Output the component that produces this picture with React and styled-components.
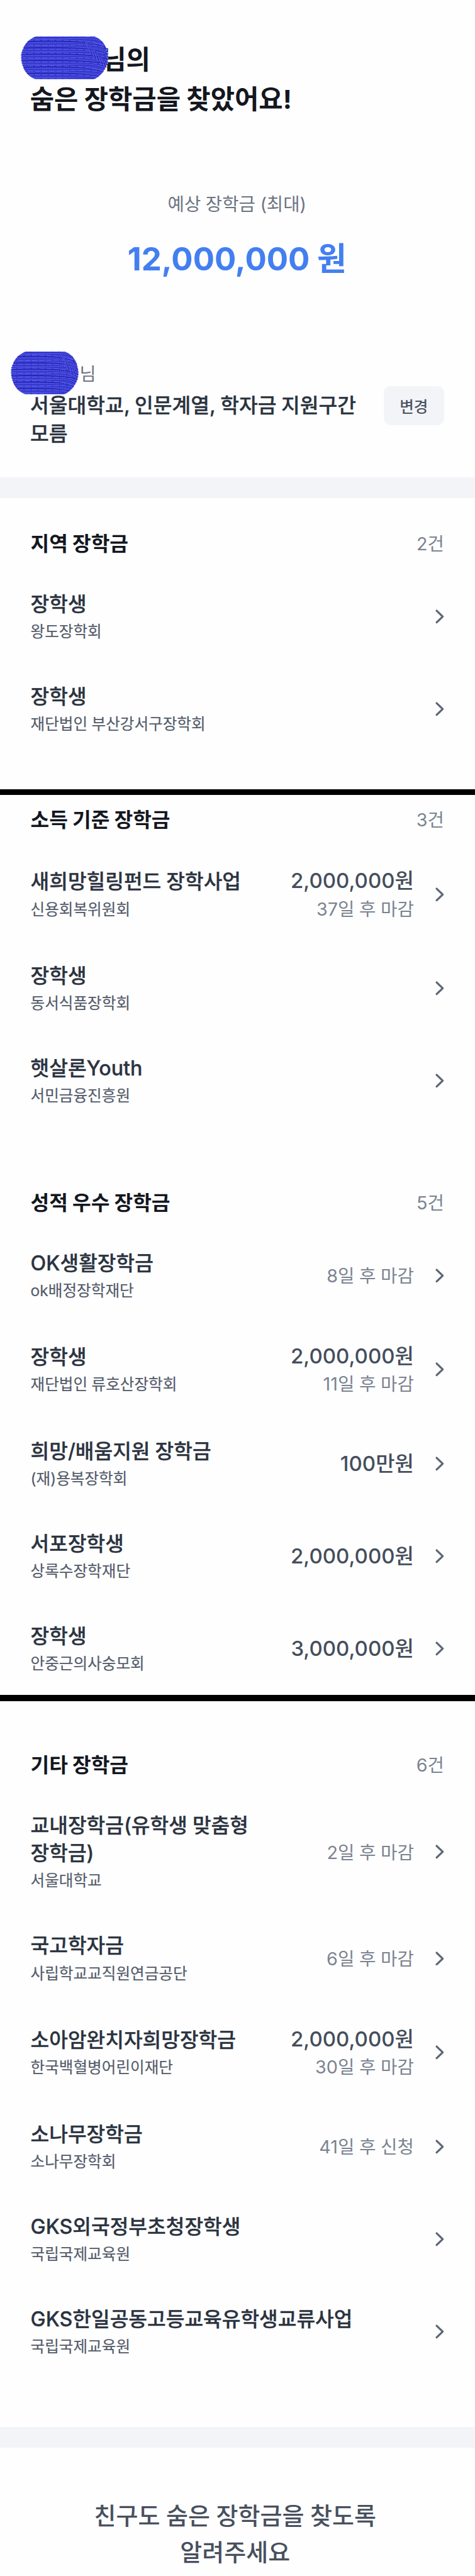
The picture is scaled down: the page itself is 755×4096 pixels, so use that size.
import styled, { createGlobalStyle, css } from "styled-components"

const GlobalStyle = createGlobalStyle`
  html {
    font-size: 9.432px;
  }
  body {
    margin: 0;
    background: #fefefe;
    overflow: hidden;
  }
  * {
    box-sizing: border-box;
  }
`

const medium = css`
  font-weight: 500;
  -webkit-text-stroke: ${({ $outline = 0.3 }) => $outline}px currentColor;
`

const Page = styled.main`
  height: 4096px;
  overflow: hidden;
  background: #fefefe;
  color: #2b3340;
  font-family: Inter, "Noto Sans CJK KR", sans-serif;
  word-break: keep-all;
  word-spacing: -0.055em;
`

const Hero = styled.header`
  padding: 6.8rem 5.2rem 0 5.05rem;
`

const Title = styled.h1`
  margin: 0;
  font-size: 4.42rem;
  font-weight: 700;
  line-height: 6.65rem;
  color: #14171f;
`

const Estimate = styled.div`
  padding-top: 12.1rem;
  text-align: center;
`

const EstimateLabel = styled.div`
  font-size: 3.04rem;
  line-height: 4.4rem;
  color: #6d7482;
`

const EstimateAmount = styled.div`
  margin-top: 3.6rem;
  font-size: 5.4rem;
  font-weight: 700;
  line-height: 7rem;
  color: #437ff0;
`

const Profile = styled.section`
  padding: 13.75rem 5.2rem 5rem 5.1rem;
`

const Owner = styled.div`
  font-size: 3rem;
  line-height: 4.4rem;
  color: #6d7482;
`

const ProfileRow = styled.div`
  display: flex;
  align-items: flex-start;
  justify-content: space-between;
  padding-top: 0.55rem;
`

const School = styled.div`
  flex: 1;
  font-size: 3.43rem;
  line-height: 4.8rem;
  word-spacing: -0.03em;
  ${medium}
`

const ChangeButton = styled.button`
  width: 10.2rem;
  height: 6.6rem;
  margin-top: -0.8rem;
  padding: 0;
  border: 0;
  border-radius: 1.2rem;
  background: #f2f4f8;
  color: #4c5462;
  font: inherit;
  font-size: 2.6rem;
  ${medium}
`

// Keeps room for the hidden name, the scribble itself lies over the text
const Masked = styled.span`
  position: relative;
  display: inline-block;
  width: ${({ $width }) => $width}rem;
  height: 1em;
`

const Scribble = styled.svg`
  position: absolute;
  left: ${({ $left }) => $left}rem;
  top: ${({ $top }) => $top}rem;
  width: ${({ $width }) => $width}rem;
  height: 7.2rem;
`

const Divider = styled.div`
  height: ${({ $dark }) => ($dark ? "1rem" : "3.5rem")};
  background: ${({ $dark }) => ($dark ? "#000" : "#f2f4f8")};
`

const Section = styled.section`
  padding: ${({ $top }) => $top}rem 5.2rem ${({ $bottom }) => $bottom}rem 5.15rem;
`

const SectionHead = styled.div`
  display: flex;
  justify-content: space-between;
  padding-top: 0.15rem;
  margin-bottom: 1.95rem;
  line-height: 5rem;
`

const SectionTitle = styled.h2`
  margin: 0;
  font-size: 3.42rem;
  font-weight: 700;
  color: #14171f;
`

const Count = styled.span`
  font-size: 3.05rem;
  color: #7b8391;
`

const Ul = styled.ul`
  margin: 0;
  padding: 0;
  list-style: none;
`

const Item = styled.li`
  display: flex;
  align-items: center;
  padding: 3.4rem 0;
`

const ItemBody = styled.div`
  flex: 1;
`

const ItemTitle = styled.div`
  font-size: 3.42rem;
  line-height: 4.7rem;
  ${medium}
`

const ItemOrg = styled.div`
  margin-top: 0.4rem;
  font-size: 2.61rem;
  line-height: 3.7rem;
  color: #545c6b;
  -webkit-text-stroke: 0.2px currentColor;
`

const ItemSide = styled.div`
  margin-left: 2.4rem;
  text-align: right;
  white-space: nowrap;
`

const Due = styled.div`
  padding-top: 0.15rem;
  font-size: 3.05rem;
  line-height: 4.4rem;
  color: #7b8391;
`

const Amount = styled.div`
  font-size: 3.5rem;
  font-weight: 500;
  line-height: 4.8rem;
  color: #454e5c;
`

const Chevron = styled.svg`
  flex: none;
  width: 1.5rem;
  height: 2.4rem;
  margin-left: 3.6rem;
`

const Footer = styled.footer`
  padding: 8.3rem 0.8rem 0 0;
  text-align: center;
  font-size: 4.03rem;
  font-weight: 500;
  line-height: 6.2rem;
  color: #48505e;
`

const wave = (y, width, i) => {
  const bend = width * 0.62
  const drop = 6 + (i % 4) * 3
  return `M0 ${y} Q${bend / 2} ${y - 2 + (i % 3) * 2} ${bend} ${y} T${width} ${y + drop}`
}

const Scrawl = ({ id, width, left, top }) => {
  const rows = Array.from({ length: 21 }, (_, i) => i)
  return (
    <Scribble
      $left={left}
      $top={top}
      $width={width / 10}
      viewBox={`0 0 ${width} 72`}
    >
      <clipPath id={id}>
        <path
          d={`M25 0 H${width - 24} Q${width - 9} 5 ${width - 3} 22 Q${width + 3} 44 ${width - 8} 58 Q${width - 15} 68 ${width - 25} 72 H25 Q10 67 4 52 Q-3 34 4 20 Q10 6 25 0Z`}
        />
      </clipPath>
      <g clipPath={`url(#${id})`} fill="none">
        <rect width={width} height="72" fill="#3d42d6" />
        {rows.map(i => (
          <path
            key={i}
            d={wave(i * 3.6 - 2, width, i)}
            stroke={i % 3 === 0 ? "#2523b4" : "#302fc4"}
            strokeWidth={i % 3 === 0 ? 1.8 : 1.1}
          />
        ))}
        {rows.map(i => (
          <path
            key={i}
            d={wave(i * 3.6, width, i + 1)}
            stroke="#6a70f2"
            strokeWidth="0.9"
            strokeDasharray={i % 2 ? "2 1.6" : "9 3"}
          />
        ))}
        {rows.slice(0, 12).map(i => (
          <path
            key={i}
            d={`M${width * 0.66 + i * 3} ${i * 3 - 4} q14 10 20 34`}
            stroke={i % 2 ? "#2b29ba" : "#5b60ea"}
            strokeWidth="1"
          />
        ))}
      </g>
      <path
        d={`M4 20 Q-3 34 4 52 M${width - 3} 22 Q${width + 3} 44 ${width - 8} 58`}
        fill="none"
        stroke="#fefefe"
        strokeWidth="1.4"
        strokeDasharray="1.5 3"
      />
    </Scribble>
  )
}

const ScholarshipItem = ({ title, org, amount, due }) => (
  <Item>
    <ItemBody>
      <ItemTitle>{title}</ItemTitle>
      <ItemOrg>{org}</ItemOrg>
    </ItemBody>
    <ItemSide>
      {amount && <Amount>{amount}</Amount>}
      {due && <Due>{due}</Due>}
    </ItemSide>
    <Chevron viewBox="0 0 15 24" fill="none">
      <path
        d="M2.2 2.2 L12.4 12 L2.2 21.8"
        stroke="#5d6675"
        strokeWidth="3.4"
        strokeLinecap="round"
        strokeLinejoin="round"
      />
    </Chevron>
  </Item>
)

const ScholarshipSection = ({ title, items, top, bottom }) => (
  <Section $top={top} $bottom={bottom}>
    <SectionHead>
      <SectionTitle>{title}</SectionTitle>
      <Count>{items.length}건</Count>
    </SectionHead>
    <Ul>
      {items.map((item, i) => (
        <ScholarshipItem key={i} {...item} />
      ))}
    </Ul>
  </Section>
)

const regional = [
  { title: "장학생", org: "왕도장학회" },
  { title: "장학생", org: "재단법인 부산강서구장학회" }
]

const income = [
  {
    title: "새희망힐링펀드 장학사업",
    org: "신용회복위원회",
    amount: "2,000,000원",
    due: "37일 후 마감"
  },
  { title: "장학생", org: "동서식품장학회" },
  { title: "햇살론Youth", org: "서민금융진흥원" }
]

const grades = [
  { title: "OK생활장학금", org: "ok배정장학재단", due: "8일 후 마감" },
  {
    title: "장학생",
    org: "재단법인 류호산장학회",
    amount: "2,000,000원",
    due: "11일 후 마감"
  },
  { title: "희망/배움지원 장학금", org: "(재)용복장학회", amount: "100만원" },
  { title: "서포장학생", org: "상록수장학재단", amount: "2,000,000원" },
  { title: "장학생", org: "안중근의사숭모회", amount: "3,000,000원" }
]

const others = [
  {
    title: "교내장학금(유학생 맞춤형 장학금)",
    org: "서울대학교",
    due: "2일 후 마감"
  },
  { title: "국고학자금", org: "사립학교교직원연금공단", due: "6일 후 마감" },
  {
    title: "소아암완치자희망장학금",
    org: "한국백혈병어린이재단",
    amount: "2,000,000원",
    due: "30일 후 마감"
  },
  { title: "소나무장학금", org: "소나무장학회", due: "41일 후 신청" },
  { title: "GKS외국정부초청장학생", org: "국립국제교육원" },
  { title: "GKS한일공동고등교육유학생교류사업", org: "국립국제교육원" }
]

export default function App() {
  return (
    <>
      <GlobalStyle />
      <Page>
        <Hero>
          <Title>
            <Masked $width={12.15}>
              <Scrawl id="name-title" width={148} left={-1.6} top={-1.1} />
            </Masked>
            님의
            <br />
            숨은 장학금을 찾았어요!
          </Title>
          <Estimate>
            <EstimateLabel>예상 장학금 (최대)</EstimateLabel>
            <EstimateAmount>12,000,000 원</EstimateAmount>
          </Estimate>
        </Hero>
        <Profile>
          <Owner>
            <Masked $width={8.3}>
              <Scrawl id="name-profile" width={115} left={-3.3} top={-1.9} />
            </Masked>
            님
          </Owner>
          <ProfileRow>
            <School>서울대학교, 인문계열, 학자금 지원구간 모름</School>
            <ChangeButton $outline={0}>변경</ChangeButton>
          </ProfileRow>
        </Profile>
        <Divider />
        <ScholarshipSection
          title="지역 장학금"
          items={regional}
          top={5.05}
          bottom={5.7}
        />
        <Divider $dark />
        <ScholarshipSection
          title="소득 기준 장학금"
          items={income}
          top={1.55}
          bottom={5}
        />
        <ScholarshipSection
          title="성적 우수 장학금"
          items={grades}
          top={5.1}
          bottom={0}
        />
        <Divider $dark />
        <ScholarshipSection
          title="기타 장학금"
          items={others}
          top={8.2}
          bottom={8.3}
        />
        <Divider />
        <Footer>
          친구도 숨은 장학금을 찾도록
          <br />
          알려주세요
        </Footer>
      </Page>
    </>
  )
}
